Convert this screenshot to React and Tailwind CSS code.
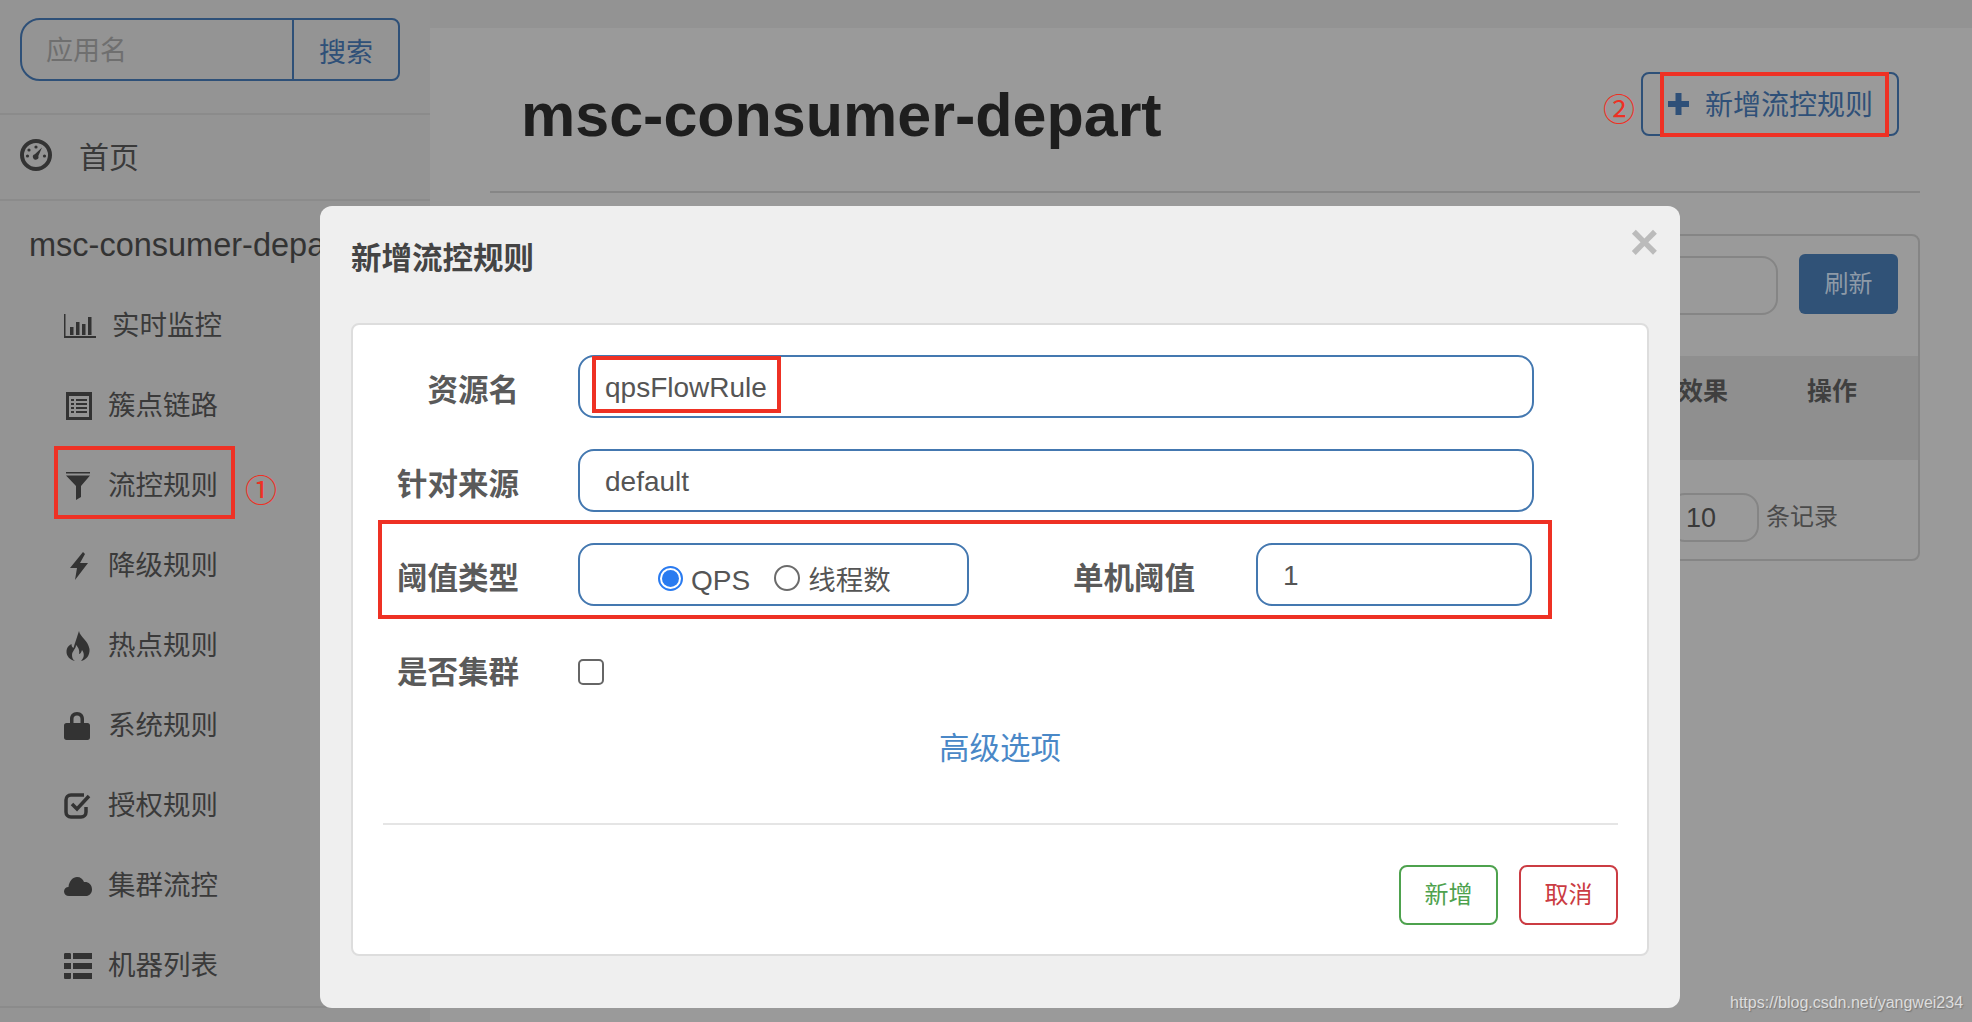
import React from 'react';

const IconDashboard = () => (
  <svg width="32" height="32" viewBox="0 0 32 32" fill="#333">
    <path fillRule="evenodd" d="M16 0a16 16 0 1 0 0 32a16 16 0 0 0 0-32zm0 4a12 12 0 1 1 0 24a12 12 0 0 1 0-24z" />
    <circle cx="16" cy="8" r="1.6" />
    <circle cx="9" cy="11" r="1.6" />
    <circle cx="7.5" cy="17" r="1.6" />
    <circle cx="24.5" cy="17" r="1.6" />
    <path d="M22 8.5L18.300 17a2.800 2.800 0 1 1-3.500-1.700z" />
  </svg>
);

const IconStats = () => (
  <svg width="32" height="24" viewBox="0 0 32 24" fill="#333">
    <path d="M0 0h1.500v22H32v2H0z" />
    <path d="M6 13h3.500v8H6zM12 8h3.500v13H12zM18 10h3.500v11H18zM24 3h3.500v18H24z" />
  </svg>
);

const IconList = () => (
  <svg width="26" height="28" viewBox="0 0 26 28" fill="#333">
    <path fillRule="evenodd" d="M0 0h26v28H0zM3 4v21h20V4z" />
    <path d="M5 7h3v2H5zM10 7h11v2H10zM5 11h3v2H5zM10 11h11v2H10zM5 15h3v2H5zM10 15h11v2H10zM5 19h3v2H5zM10 19h11v2H10z" />
  </svg>
);

const IconFilter = () => (
  <svg width="24" height="28" viewBox="0 0 24 28" fill="#333">
    <path d="M0 0h24v1.500H0zM0 3.500h24L15 14v11l-5 3V14z" />
  </svg>
);

const IconBolt = () => (
  <svg width="20" height="28" viewBox="0 0 20 28" fill="#333">
    <path d="M14 0L1 16h7L6 28l13-17h-8l5-9z" />
  </svg>
);

const IconFire = () => (
  <svg width="24" height="30" viewBox="0 0 24 30" fill="#333">
    <path d="M13 0c1 6 9 9 10.500 18c.5 6-3 11-8.500 12c3-3 4-7 1-11c-1 3-2 4-3 4c1-4-1-7-3-9c0 4-4 6-4 10c0 3 1 5 3 6c-5-1-8.500-5-8.500-9c0-5 3-7 5-8c0 2 .5 3 2 4C9 12 11 6 13 0z" />
  </svg>
);

const IconLock = () => (
  <svg width="26" height="28" viewBox="0 0 26 28" fill="#333">
    <path fillRule="evenodd" d="M13 0c4.500 0 7 3 7 7v4h3.500c1.500 0 2.500 1 2.500 2.500V25.500c0 1.500-1 2.500-2.500 2.500h-21C1 28 0 27 0 25.500V13.500C0 12 1 11 2.500 11H6V7c0-4 2.500-7 7-7zM13 3.500c-2.300 0-3.500 1.500-3.500 3.500v4h7V7c0-2-1.200-3.500-3.500-3.500z" />
  </svg>
);

const IconCheck = () => (
  <svg width="27" height="26" viewBox="0 0 27 26" fill="none" stroke="#333">
    <path strokeWidth="3.500" d="M20 2H7C4 2 2 4 2 7v12c0 3 2 5 5 5h10c3 0 5-2 5-5v-5" />
    <path strokeWidth="3.500" d="M8 11l5 5L25 3" />
  </svg>
);

const IconCloud = () => (
  <svg width="28" height="19" viewBox="0 0 28 19" fill="#333">
    <path d="M5 19C2 19 0 17 0 14.500C0 12 2 10 4.500 10C5 4 9 0 13 0c3.500 0 6 2 7 5c4-.5 8 2 8 7.500c0 4-3 6.500-6 6.500z" />
  </svg>
);

const IconThList = () => (
  <svg width="28" height="26" viewBox="0 0 28 26" fill="#333">
    <path d="M0 1.500C0 .5.500 0 1.500 0h4C6.500 0 7 .5 7 1.500V6H0zM9 0h19v6H9zM0 10h7v6H0zM9 10h19v6H9zM0 20h7v4.500C7 25.500 6.500 26 5.500 26h-4C.5 26 0 25.500 0 24.500zM9 20h19v6H9z" />
  </svg>
);

const menu = [
  { icon: <IconStats />, label: '实时监控', gap: 'w-[48px]' },
  { icon: <IconList />, label: '簇点链路', gap: 'w-[44px] pl-[2px]' },
  { icon: <IconFilter />, label: '流控规则', gap: 'w-[44px] pl-[2px]' },
  { icon: <IconBolt />, label: '降级规则', gap: 'w-[44px] pl-[5px]' },
  { icon: <IconFire />, label: '热点规则', gap: 'w-[44px] pl-[2px]' },
  { icon: <IconLock />, label: '系统规则', gap: 'w-[44px]' },
  { icon: <IconCheck />, label: '授权规则', gap: 'w-[44px]' },
  { icon: <IconCloud />, label: '集群流控', gap: 'w-[44px]' },
  { icon: <IconThList />, label: '机器列表', gap: 'w-[44px]' },
];

const Sidebar = () => (
  <aside className="w-[430px] h-full flex flex-col bg-[#949494] text-[#3a3a3a]">
    <div className="pt-[18px] px-[20px] pb-[32px] border-b-2 border-[#8b8b8b]">
      <div className="flex w-[380px] h-[63px] border-2 border-[#2e5078] rounded-l-[20px] rounded-r-[8px]">
        <div className="w-[270px] pl-[24px] text-[27px] leading-[63px] text-[#6f6f6f]">应用名</div>
        <div className="flex-1 border-l-2 border-[#2e5078] text-center text-[27px] leading-[67px] text-[#2f5078]">搜索</div>
      </div>
    </div>
    <div className="h-[86px] flex items-center pl-[20px] border-b-2 border-[#8b8b8b]">
      <div className="w-[59px] flex -mt-[4px]"><IconDashboard /></div>
      <span className="text-[30px]">首页</span>
    </div>
    <div className="h-[85px] pl-[29px] pt-[24px] text-[32.500px] leading-[40px] whitespace-nowrap text-[#333]">msc-consumer-depart</div>
    <nav className="border-b-2 border-[#8b8b8b]">
      {menu.map((item) => (
        <div key={item.label} className="h-[80px] flex items-center pl-[64px] text-[27.500px]">
          <div className={`${item.gap} flex items-center shrink-0`}>{item.icon}</div>
          <span>{item.label}</span>
        </div>
      ))}
    </nav>
  </aside>
);

const Main = () => (
  <main className="flex-1 h-full bg-[#9a9a9a]">
    <div className="h-[28px] bg-[#939393]" />
    <div className="pl-[60px] pr-[52px]">
      <header className="h-[165px] flex justify-between border-b-2 border-[#868686]">
        <h1 className="ml-[31px] mt-[52px] text-[61px] leading-[70px] font-bold text-[#1e1e1e]">msc-consumer-depart</h1>
        <button className="mt-[44px] mr-[21px] w-[258px] h-[64px] pl-[25px] flex items-center border-2 border-[#2e5078] rounded-lg text-[28px] text-[#2f5078]">
          <svg width="21" height="22" viewBox="0 0 21 22" fill="#2f5078" className="mr-[16px]">
            <path d="M7.500 0h6v8h7.500v6h-7.500v8h-6v-8H0V8h7.500z" />
          </svg>
          <span className="pt-[3px]">新增流控规则</span>
        </button>
      </header>
      <section className="mt-[41px] h-[327px] border-2 border-[#858585] rounded-lg">
        <div className="h-[120px] pt-[18px] pr-[20px] flex justify-end items-start gap-[21px]">
          <div className="w-[300px] h-[59px] mt-[2px] border-2 border-[#858585] rounded-[16px]" />
          <button className="w-[99px] h-[60px] bg-[#305277] rounded-md text-[24px] text-[#8e9aa7]">刷新</button>
        </div>
        <div className="h-[104px] bg-[#8f8f8f] flex justify-end pt-[18px] pr-[61px] gap-[79px] text-[25px] leading-[34px] font-bold text-[#3f3f3f]">
          <span>效果</span>
          <span>操作</span>
        </div>
        <div className="pt-[33px] pr-[80px] flex justify-end items-center gap-[7px]">
          <div className="w-[90px] h-[49px] border-2 border-[#858585] rounded-[16px] text-[27px] leading-[47px] text-[#3a3a3a] text-right pr-[41px]">10</div>
          <span className="text-[24px] text-[#4a4a4a] -mt-[1px]">条记录</span>
        </div>
      </section>
    </div>
  </main>
);

const inputCls = 'h-[63px] pl-[25px] pt-[2px] border-2 border-[#4478b0] rounded-[16px] text-[28px] text-[#555] outline-none bg-white';
const labelCls = 'w-[136px] shrink-0 pt-[7px] text-right font-bold text-[30.500px] leading-[40px] text-[#5a5a5a] whitespace-nowrap';

const Modal = () => (
  <div className="absolute left-[320px] top-[206px] w-[1360px] h-[802px] bg-[#efefef] rounded-[12px] px-[31px]">
    <div className="h-[117px] flex justify-between">
      <h3 className="pt-[32px] text-[30.500px] leading-[40px] font-bold text-[#444]">新增流控规则</h3>
      <span className="text-[50px] leading-[50px] mt-[11px] mr-[-10px] font-bold text-[#bbb]">×</span>
    </div>
    <div className="h-[633px] border-2 border-[#ddd] rounded-lg bg-white pt-[30px] pl-[30px] pr-[29px]">
      <div className="flex flex-col gap-[31px]">
        <div className="h-[63px] flex items-center gap-[59px]">
          <label className={labelCls}>资源名</label>
          <input readOnly value="qpsFlowRule" className={`${inputCls} w-[956px]`} />
        </div>
        <div className="h-[63px] flex items-center gap-[59px]">
          <label className={labelCls}>针对来源</label>
          <input readOnly value="default" className={`${inputCls} w-[956px]`} />
        </div>
        <div className="h-[63px] flex items-center gap-[59px]">
          <label className={labelCls}>阈值类型</label>
          <div className="w-[391px] h-[63px] shrink-0 border-2 border-[#4478b0] rounded-[16px] flex items-center pl-[78px] pt-[13px] text-[28px] text-[#555]">
            <span className="w-[25px] h-[25px] mb-[6px] rounded-full border-2 border-[#2a7bf0] flex items-center justify-center">
              <span className="w-[17px] h-[17px] rounded-full bg-[#2a7bf0]" />
            </span>
            <span className="ml-[8px]">QPS</span>
            <span className="w-[26px] h-[26px] ml-[24px] mb-[6px] rounded-full border-2 border-[#6b6b6b]" />
            <span className="ml-[8px] text-[27.500px]">线程数</span>
          </div>
          <label className="w-[122px] ml-[45px] pt-[7px] font-bold text-[30.500px] leading-[40px] text-[#5a5a5a] whitespace-nowrap">单机阈值</label>
          <input readOnly value="1" className={`${inputCls} w-[276px] ml-[2px]`} />
        </div>
        <div className="h-[63px] flex items-center gap-[59px]">
          <label className={labelCls}>是否集群</label>
          <span className="w-[26px] h-[26px] mt-[6px] border-2 border-[#666] rounded-[5px] bg-white" />
        </div>
      </div>
      <div className="mt-[28px] pl-[556px] text-[30.500px] leading-[40px] text-[#4a88c7]">高级选项</div>
      <div className="mt-[55px] h-[2px] bg-[#e5e5e5]" />
      <div className="mt-[40px] flex justify-end gap-[21px]">
        <button className="w-[99px] h-[60px] border-2 border-[#4ea24e] rounded-lg text-[24px] text-[#4ea24e]">新增</button>
        <button className="w-[99px] h-[60px] border-2 border-[#cb3c43] rounded-lg text-[24px] text-[#cb3c43]">取消</button>
      </div>
    </div>
  </div>
);

export default function App() {
  return (
    <div className="relative w-[1972px] h-[1022px] overflow-hidden flex font-['Liberation_Sans','Noto_Sans_CJK_SC',sans-serif]">
      <Sidebar />
      <Main />
      <Modal />

      {/* red annotations on top of the screenshot */}
      <div className="absolute left-[54px] top-[446px] w-[181px] h-[73px] border-4 border-[#ee3124]" />
      <div className="absolute left-[245px] top-[469px] text-[32px] leading-[44px] text-[#ee3124]">①</div>
      <div className="absolute left-[1660px] top-[72px] w-[229px] h-[65px] border-4 border-[#ee3124]" />
      <div className="absolute left-[1603px] top-[88px] text-[32px] leading-[44px] text-[#ee3124]">②</div>
      <div className="absolute left-[592px] top-[356px] w-[189px] h-[57px] border-4 border-[#ee3124]" />
      <div className="absolute left-[378px] top-[520px] w-[1174px] h-[99px] border-4 border-[#ee3124]" />

      <div className="absolute left-[1730px] top-[994px] text-[16px] leading-[18px] text-[#dddddd] [text-shadow:1px_1px_1px_#777]">https://blog.csdn.net/yangwei234</div>
    </div>
  );
}
